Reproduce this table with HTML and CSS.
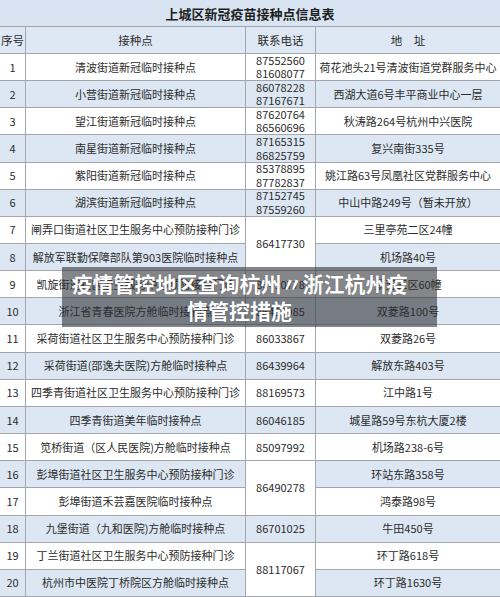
FILE: index.html
```html
<!DOCTYPE html>
<html lang="zh">
<head>
<meta charset="utf-8">
<link rel="stylesheet" href="styles.css">
</head>
<body>
<div class="page">
  <div class="sheet">
    <div class="c title">上城区新冠疫苗接种点信息表</div>

    <div class="c hd">序号</div>
    <div class="c hd">接种点</div>
    <div class="c hd">联系电话</div>
    <div class="c hd last">地　址</div>

    <div class="c">1</div>
    <div class="c">清波街道新冠临时接种点</div>
    <div class="c tel">87552560<br>81608077</div>
    <div class="c last">荷花池头21号清波街道党群服务中心</div>

    <div class="c b">2</div>
    <div class="c b">小营街道新冠临时接种点</div>
    <div class="c b tel">86078228<br>87167671</div>
    <div class="c b last">西湖大道6号丰平商业中心一层</div>

    <div class="c">3</div>
    <div class="c">望江街道新冠临时接种点</div>
    <div class="c tel">87620764<br>86560696</div>
    <div class="c last">秋涛路264号杭州中兴医院</div>

    <div class="c b">4</div>
    <div class="c b">南星街道新冠临时接种点</div>
    <div class="c b tel">87165315<br>86825759</div>
    <div class="c b last">复兴南街335号</div>

    <div class="c">5</div>
    <div class="c">紫阳街道新冠临时接种点</div>
    <div class="c tel">85378895<br>87782837</div>
    <div class="c last">姚江路63号凤凰社区党群服务中心</div>

    <div class="c b">6</div>
    <div class="c b">湖滨街道新冠临时接种点</div>
    <div class="c b tel">87152745<br>87559260</div>
    <div class="c b last">中山中路249号（暂未开放）</div>

    <div class="c">7</div>
    <div class="c">闸弄口街道社区卫生服务中心预防接种门诊</div>
    <div class="c span2">86417730</div>
    <div class="c last">三里亭苑二区24幢</div>

    <div class="c b">8</div>
    <div class="c b">解放军联勤保障部队第903医院临时接种点</div>
    <div class="c b last">机场路40号</div>

    <div class="c">9</div>
    <div class="c">凯旋街道社区卫生服务中心预防接种门诊</div>
    <div class="c">86410778</div>
    <div class="c last">景芳三区60幢</div>

    <div class="c b">10</div>
    <div class="c b">浙江省青春医院方舱临时接种点</div>
    <div class="c b">86430985</div>
    <div class="c b last">双菱路100号</div>

    <div class="c">11</div>
    <div class="c">采荷街道社区卫生服务中心预防接种门诊</div>
    <div class="c">86033867</div>
    <div class="c last">双菱路26号</div>

    <div class="c b">12</div>
    <div class="c b">采荷街道(邵逸夫医院)方舱临时接种点</div>
    <div class="c b">86439964</div>
    <div class="c b last">解放东路403号</div>

    <div class="c">13</div>
    <div class="c">四季青街道社区卫生服务中心预防接种门诊</div>
    <div class="c">88169573</div>
    <div class="c last">江中路1号</div>

    <div class="c b">14</div>
    <div class="c b">四季青街道美年临时接种点</div>
    <div class="c b">86046185</div>
    <div class="c b last">城星路59号东杭大厦2楼</div>

    <div class="c">15</div>
    <div class="c">笕桥街道（区人民医院)方舱临时接种点</div>
    <div class="c">85097992</div>
    <div class="c last">机场路238-6号</div>

    <div class="c b">16</div>
    <div class="c b">彭埠街道社区卫生服务中心预防接种门诊</div>
    <div class="c span2">86490278</div>
    <div class="c b last">环站东路358号</div>

    <div class="c">17</div>
    <div class="c">彭埠街道禾芸嘉医院临时接种点</div>
    <div class="c last">鸿泰路98号</div>

    <div class="c b">18</div>
    <div class="c b">九堡街道（九和医院)方舱临时接种点</div>
    <div class="c b">86701025</div>
    <div class="c b last">牛田450号</div>

    <div class="c">19</div>
    <div class="c">丁兰街道社区卫生服务中心预防接种门诊</div>
    <div class="c span2">88117067</div>
    <div class="c last">环丁路618号</div>

    <div class="c b">20</div>
    <div class="c b">杭州市中医院丁桥院区方舱临时接种点</div>
    <div class="c b last">环丁路1630号</div>
  </div>

  <div class="overlay">疫情管控地区查询杭州〃浙江杭州疫<br>情管控措施</div>
</div>
</body>
</html>
```

FILE: styles.css
```css
* {
  box-sizing: border-box;
}

html, body {
  margin: 0;
  padding: 0;
  background: #ffffff;
}

.page {
  position: relative;
  width: 500px;
  height: 597px;
  overflow: hidden;
  font-family: "Noto Sans CJK SC", "Noto Sans", sans-serif;
}

.sheet {
  display: grid;
  grid-template-columns: 26px 220px 70px 184px;
  grid-template-rows: 27px 27px repeat(20, minmax(0, 1fr));
  width: 500px;
  height: 597px;
}

.c {
  display: flex;
  align-items: center;
  justify-content: center;
  min-height: 0;
  text-align: center;
  font-size: 11px;
  line-height: 13px;
  color: #2b2b2b;
  background: #ffffff;
  border-right: 1px solid #a3a7ad;
  border-bottom: 1px solid #a3a7ad;
  white-space: nowrap;
}

.c.last {
  border-right: none;
}

.c.b {
  background: #dce7f3;
}

.tel {
  line-height: 13.5px;
}

.title {
  grid-column: 1 / 5;
  background: #d8e4f1;
  font-size: 13px;
  font-weight: 700;
  color: #1f1f1f;
  border-right: none;
}

.hd {
  background: #dde8f4;
  font-size: 11.5px;
  color: #2b2b2b;
}

.span2 {
  grid-row: span 2;
}

.overlay {
  position: absolute;
  left: 62px;
  top: 267px;
  width: 375px;
  height: 60px;
  padding: 3px 20px 0 0;
  background: rgba(45, 47, 52, 0.58);
  color: #ffffff;
  font-size: 21px;
  line-height: 27px;
  font-weight: 700;
  text-align: center;
  white-space: nowrap;
  text-shadow: 0 0 1px rgba(0, 0, 0, 0.4);
}
```
